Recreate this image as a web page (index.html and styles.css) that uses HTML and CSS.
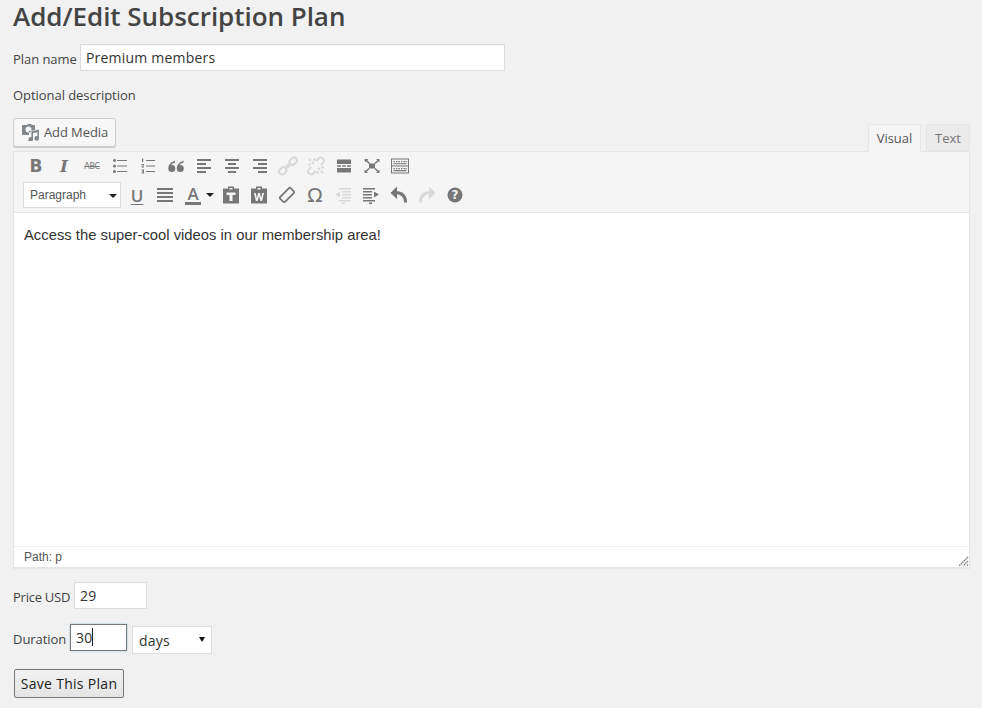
FILE: index.html
```html
<!DOCTYPE html>
<html lang="en">
<head>
<meta charset="utf-8">
<title>Add/Edit Subscription Plan</title>
<link rel="stylesheet" href="styles.css">
</head>
<body>
<form class="page">
  <h1 class="title">Add/Edit Subscription Plan</h1>
  <div class="row name-row">
    <label class="label">Plan name</label>
    <input class="input name-input" type="text" value="Premium members">
  </div>
  <p class="label desc">Optional description</p>

  <div class="editor-head">
    <button class="media-btn" type="button">
      <svg class="media-ico" viewBox="0 0 18 18"><path fill-rule="evenodd" d="M3 2h2l1-1h3l1 1h2a1 1 0 0 1 1 1v4l-6 1v4H1a1 1 0 0 1-1-1V3a1 1 0 0 1 1-1zM6.500 3.500a3 3 0 1 0 0 6 3 3 0 0 0 0-6z"/><path d="M17 6.500v9a2.300 2.300 0 1 1-1.600-2.200V9.200l-4.400.9v6.400a2.300 2.300 0 1 1-1.600-2.200V8.300z"/></svg>
      Add Media
    </button>
    <div class="tabs">
      <span class="tab tab-on">Visual</span>
      <span class="tab tab-text">Text</span>
    </div>
  </div>

  <div class="editor">
    <div class="toolbar">
      <div class="tb-row">
        <span class="tb glyph bold">B</span>
        <span class="tb glyph italic">I</span>
        <span class="tb glyph abc">ABC</span>
        <span class="tb"><svg viewBox="0 0 20 20"><circle cx="4.500" cy="4.500" r="1.500"/><circle cx="4.500" cy="10" r="1.500"/><circle cx="4.500" cy="15.500" r="1.500"/><path d="M7 4h10v1H7zM7 9.500h10v1H7zM7 15h10v1H7z"/></svg></span>
        <span class="tb"><svg viewBox="0 0 20 20"><path d="M4 2.500h1.200v3.500H4zM3.500 8H6v1L4.500 10.500H6v1H3.500v-1L5 9H3.500zM3.500 13.500H6v4H3.500v-1H5v-.5H4v-.8h1v-.7H3.500z"/><path d="M8 4h9v1H8zM8 9.500h9v1H8zM8 15h9v1H8z"/></svg></span>
        <span class="tb"><svg viewBox="0 0 20 20"><path d="M9 4.500C5 6 2.300 9 2.300 12.500a3.500 3.500 0 1 0 3.500-3.500c-.3 0-.5 0-.7.1C5.700 8 7 7 9 6.700zM17.500 4.500C13.500 6 10.800 9 10.800 12.500a3.500 3.500 0 1 0 3.500-3.500c-.3 0-.5 0-.7.1.6-1.100 1.900-2.100 3.900-2.400z"/></svg></span>
        <span class="tb"><svg viewBox="0 0 20 20"><path d="M3 3h14v2H3zM3 7h9v2H3zM3 11h14v2H3zM3 15h9v2H3z"/></svg></span>
        <span class="tb"><svg viewBox="0 0 20 20"><path d="M3 3h14v2H3zM6 7h8v2H6zM3 11h14v2H3zM6 15h8v2H6z"/></svg></span>
        <span class="tb"><svg viewBox="0 0 20 20"><path d="M3 3h14v2H3zM8 7h9v2H8zM3 11h14v2H3zM8 15h9v2H8z"/></svg></span>
        <span class="tb off"><svg viewBox="0 0 20 20"><g class="link-stroke"><path d="M8.500 8.500l3 3"/><rect x="10.500" y="1.500" width="8" height="6" rx="3" transform="rotate(-45 14.500 4.500) translate(0 1)"/><rect x="1.500" y="12.500" width="8" height="6" rx="3" transform="rotate(-45 5.500 15.500) translate(0 -1)"/><path d="M7 13l6-6"/></g></svg></span>
        <span class="tb off"><svg viewBox="0 0 20 20"><g class="link-stroke"><path d="M10.500 5l2-2.300a3 3 0 0 1 4.600 4L15 9M9.500 15l-2 2.300a3 3 0 0 1-4.600-4L5 11M5 5L3 3M15 15l2 2M5 8.500H2M15 11.500h3M8.500 5V2M11.500 15v3M8 8l-2-2M12 12l2 2"/></g></svg></span>
        <span class="tb"><svg viewBox="0 0 20 20"><path d="M3 3.500h14v4.500H3zM3 9.200h4v1.600H3zM8.200 9.200h3.600v1.600H8.200zM13 9.200h4v1.600h-4zM3 12h14v4.500H3z"/></svg></span>
        <span class="tb"><svg viewBox="0 0 20 20"><path d="M7 7.500h6v5H7zM2.500 3h4L5.300 4.200 8 7l-1 1-2.800-2.700L3 6.500zM17.500 3v3.500l-1.200-1.200L13.500 8l-1-1 2.800-2.800L14 3zM2.500 17v-3.500l1.200 1.200L6.500 12l1 1-2.800 2.800L6 17zM17.500 17H14l1.300-1.200L12.500 13l1-1 2.800 2.700 1.200-1.200z"/></svg></span>
        <span class="tb kbd"><svg viewBox="0 0 20 20"><path fill-rule="evenodd" d="M1 2.500h18v15H1zM2 3.500v6h16v-6zM2 10.500v6h16v-6z"/><path d="M3.500 5h1.500v1.200H3.500zM6 5h1.500v1.200H6zM8.500 5H10v1.200H8.500zM11 5h1.500v1.200H11zM13.500 5H15v1.200h-1.500zM15.500 5h1.200v1.200h-1.200zM3.500 7.200h13v1H3.500zM3.500 12h1.500v1.200H3.500zM6 12h1.500v1.200H6zM8.500 12H10v1.200H8.500zM11 12h1.500v1.200H11zM13.500 12H15v1.200h-1.500zM15.500 12h1.200v1.200h-1.200zM3.500 14h13v1.200h-13z"/></svg></span>
      </div>
      <div class="tb-row tb-row2">
        <div class="format">Paragraph<i class="caret"></i></div>
        <span class="tb glyph under">U</span>
        <span class="tb"><svg viewBox="0 0 20 20"><path d="M2 3h16v2H2zM2 7h16v2H2zM2 11h16v2H2zM2 15h16v2H2z"/></svg></span>
        <span class="tb color"><span class="glyph-a">A</span><i class="caret"></i></span>
        <span class="tb"><svg viewBox="0 0 20 20"><path fill-rule="evenodd" d="M7 3.500V1.500h6v2h5v15H2v-15zM8.500 3v1.500h3V3zM5.500 7.500v2.500h3v6h3v-6h3V7.500z"/></svg></span>
        <span class="tb word"><svg viewBox="0 0 20 20"><path fill-rule="evenodd" d="M7 3.500V1.500h6v2h5v15H2v-15zM8.500 3v1.500h3V3zM5 8l1.900 8h1.700L10 11l1.400 5h1.700L15 8h-1.800l-1 5.200L10.800 8H9.200L7.800 13.200 6.800 8z"/></svg></span>
        <span class="tb"><svg viewBox="0 0 20 20"><g class="eraser"><rect x="2.500" y="6.500" width="15" height="7" rx="1.500" transform="rotate(-45 10 10)"/></g></svg></span>
        <span class="tb glyph omega">Ω</span>
        <span class="tb off"><svg viewBox="0 0 20 20"><path d="M6 3h12v1.500H6zM9 6h9v1.500H9zM9 9h9v1.500H9zM9 12h9v1.500H9zM6 15h12v1.500H6zM9 17.500h3V19H9zM2 9.500L7 6.500v6z"/></svg></span>
        <span class="tb"><svg viewBox="0 0 20 20"><path d="M2 3h12v1.500H2zM2 6h9v1.500H2zM2 9h9v1.500H2zM2 12h9v1.500H2zM2 15h12v1.500H2zM8 17.500h3V19H8zM18 9.500L13 6.500v6z"/></svg></span>
        <span class="tb"><svg viewBox="0 0 20 20"><path d="M8 1.500L1.500 8 8 14z"/><path class="arc" d="M6 7.500c6.500 0 10.500 3 10.500 10"/></svg></span>
        <span class="tb off"><svg viewBox="0 0 20 20"><path d="M12 1.500L18.500 8 12 14z"/><path class="arc" d="M14 7.500c-6.500 0-10.500 3-10.500 10"/></svg></span>
        <span class="tb"><svg viewBox="0 0 20 20"><circle cx="10" cy="10" r="7.500"/><text class="help-q" x="10" y="14.300" text-anchor="middle">?</text></svg></span>
      </div>
    </div>
    <div class="content">Access the super-cool videos in our membership area!</div>
    <div class="status">Path: p
      <svg class="grip" viewBox="0 0 11 11"><path d="M10 1L1 10M10 5L5 10M10 8.500L8.500 10" /></svg>
    </div>
  </div>

  <div class="row price-row">
    <label class="label">Price USD</label>
    <input class="input price-input" type="text" value="29">
  </div>
  <div class="row duration-row">
    <label class="label">Duration</label>
    <span class="focus-wrap">
      <input class="input duration-input" type="text" value="30">
      <i class="text-caret"></i>
    </span>
    <span class="select-wrap">
      <select class="select"><option>days</option></select>
    </span>
  </div>
  <button class="save" type="button">Save This Plan</button>
</form>
</body>
</html>
```
FILE: styles.css
```css
html, body { margin: 0; padding: 0; }
body {
  background: #f1f1f1;
  color: #444;
  font-family: "Open Sans", sans-serif;
  font-size: 13px;
  height: 708px;
  overflow: hidden;
}
.page { padding: 0 12px 0 13px; }
.title {
  margin: 0;
  font-size: 26px;
  line-height: 32px;
  font-weight: 600;
  letter-spacing: -.04px;
  color: #444;
}
.row { display: flex; align-items: center; }
.label { font-size: 13px; line-height: 18px; color: #444; letter-spacing: -.05px; flex: none; }
.input {
  box-sizing: border-box;
  border: 1px solid #ddd;
  background: #fff;
  color: #333;
  font-family: "Open Sans", sans-serif;
  font-size: 14px;
  letter-spacing: .2px;
  padding: 0 5px;
  margin: 0;
  outline: 0;
  box-shadow: inset 0 1px 2px rgba(0,0,0,.03);
}
.name-row { margin-top: 12px; height: 27px; }
.name-row .label { position: relative; top: 1px; width: 67px; }
.name-input { width: 425px; height: 27px; }
.desc { margin: 15px 0 0; }
.editor-head {
  display: flex;
  justify-content: space-between;
  align-items: flex-end;
  margin-top: 13px;
  height: 34px;
}
.media-btn {
  box-sizing: border-box;
  display: flex;
  align-items: center;
  gap: 4px;
  width: 103px;
  height: 29px;
  margin-bottom: 4px;
  padding: 0 0 2px 8px;
  border: 1px solid #ccc;
  border-radius: 3px;
  background: #f7f7f7;
  box-shadow: 0 1px 0 #ccc;
  color: #555;
  font-family: "Open Sans", sans-serif;
  font-size: 13px;
  letter-spacing: -.1px;
}
.media-ico { width: 18px; height: 18px; fill: #82878c; flex: none; }
.tabs { display: flex; gap: 5px; }
.tab {
  box-sizing: border-box;
  height: 27px;
  line-height: 26px;
  text-align: center;
  font-size: 13px;
  color: #777;
  background: #ebebeb;
  border: 1px solid #e5e5e5;
}
.tab-text { width: 44px; }
.tab-on {
  width: 53px;
  height: 28px;
  margin-bottom: -1px;
  color: #555;
  background: #f5f5f5;
  border-bottom-color: #f5f5f5;
  position: relative;
}
.editor {
  box-sizing: border-box;
  height: 417px;
  border: 1px solid #e5e5e5;
  background: #fff;
  display: flex;
  flex-direction: column;
  box-shadow: 0 1px 1px rgba(0,0,0,.04);
}
.toolbar {
  box-sizing: border-box;
  height: 61px;
  padding: 0 8px;
  background: #f5f5f5;
  border-bottom: 1px solid #e5e5e5;
}
.tb-row { display: flex; align-items: center; height: 28px; }
.tb-row2 { margin-top: 1px; }
.tb {
  flex: none;
  width: 28px;
  height: 28px;
  display: flex;
  align-items: center;
  justify-content: center;
}
.tb svg { width: 20px; height: 20px; fill: #777; display: block; }
.tb.off svg { fill: #d9d9d9; stroke: none; }
.link-stroke { fill: none; stroke: #d9d9d9; stroke-width: 2; }
.eraser { fill: none; stroke: #777; stroke-width: 1.800; }
.arc { fill: none; stroke: #777; stroke-width: 3; }
.off .arc { stroke: #d9d9d9; }
.glyph { color: #777; font-family: "DejaVu Sans", sans-serif; }
.bold { font-weight: 700; font-size: 17px; }
.italic { font-family: "DejaVu Serif", serif; font-style: italic; font-weight: 700; font-size: 17px; }
.abc { font-size: 8px; text-decoration: line-through; letter-spacing: -.3px; }
.under { font-family: "Open Sans", sans-serif; font-weight: 600; font-size: 17px; text-decoration: underline; text-underline-offset: 2px; }
.omega { font-size: 20px; }
.format {
  box-sizing: border-box;
  flex: none;
  width: 98px;
  height: 26px;
  margin: 0 2px 0 1px;
  padding: 0 0 0 6px;
  line-height: 24px;
  border: 1px solid #ddd;
  background: #fff;
  color: #555;
  font-family: "Liberation Sans", sans-serif;
  font-size: 12px;
  position: relative;
}
.caret {
  width: 0;
  height: 0;
  border: 4px solid transparent;
  border-top-color: #222;
  border-bottom-width: 0;
}
.format .caret { position: absolute; right: 3px; top: 11px; }
.tb.color { justify-content: flex-start; padding-left: 6px; box-sizing: border-box; width: 38px; gap: 5px; }
.glyph-a {
  color: #777;
  font-family: "Open Sans", sans-serif;
  font-weight: 600;
  font-size: 17px;
  line-height: 16px;
  width: 16px;
  text-align: center;
  border-bottom: 3px solid #777;
}
.help-q { fill: #f5f5f5; font: 700 12px "DejaVu Sans", sans-serif; }
.content {
  flex: 1;
  padding: 12px 10px;
  font-family: "Liberation Sans", sans-serif;
  font-size: 14.8px;
  line-height: 20px;
  color: #333;
}
.status {
  box-sizing: border-box;
  height: 21px;
  padding-left: 10px;
  border-top: 1px solid #efefef;
  font-family: "Liberation Sans", sans-serif;
  font-size: 12px;
  line-height: 21px;
  color: #555;
  position: relative;
}
.grip { position: absolute; right: 0; bottom: 0; width: 11px; height: 11px; stroke: #777; stroke-width: 1.500; stroke-dasharray: 1.400 .8; fill: none; }
.price-row { margin-top: 14px; height: 27px; }
.price-row .label { position: relative; top: 1px; width: 61px; letter-spacing: -.25px; }
.price-input { width: 73px; height: 27px; }
.duration-row { margin-top: 15px; height: 30px; align-items: flex-start; }
.duration-row .label { width: 57px; margin-top: 6px; }
.focus-wrap { position: relative; display: block; margin-right: 5px; }
.duration-input {
  display: block;
  width: 57px;
  height: 27px;
  border-color: #777;
  box-shadow: 0 0 2px rgba(30,140,190,.4);
}
.text-caret { position: absolute; left: 22px; top: 4px; width: 1px; height: 18px; background: #222; }
.select-wrap { position: relative; display: block; margin-top: 2px; }
.select-wrap::after {
  content: "";
  position: absolute;
  right: 7px;
  top: 11px;
  border: 3px solid transparent;
  border-top: 5px solid #111;
  border-bottom-width: 0;
}
.select {
  display: block;
  box-sizing: border-box;
  width: 80px;
  height: 28px;
  appearance: none;
  border: 1px solid #ddd;
  border-radius: 0;
  background: #fff;
  color: #333;
  font-family: "Open Sans", sans-serif;
  font-size: 14px;
  letter-spacing: .2px;
  padding: 0 6px;
}
.save {
  display: block;
  box-sizing: border-box;
  width: 110px;
  height: 29px;
  margin: 15px 0 0 1px;
  padding: 0;
  border: 1px solid #777;
  border-radius: 2px;
  background: linear-gradient(#f2f2f2, #e4e4e4);
  color: #222;
  font-family: "Open Sans", sans-serif;
  font-size: 14px;
  letter-spacing: .3px;
}
```
